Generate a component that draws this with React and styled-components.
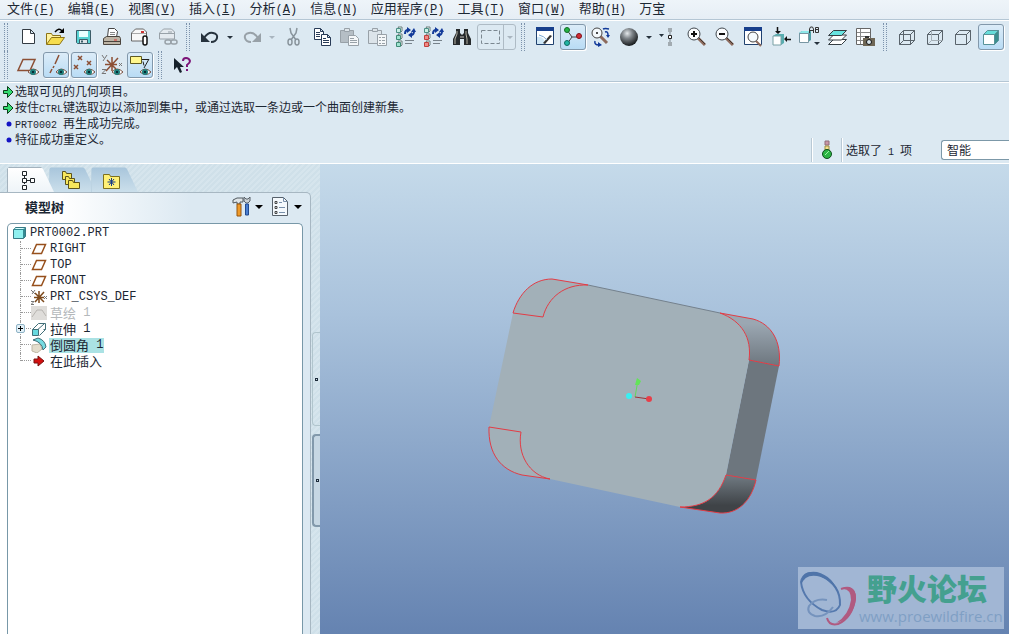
import React, { useState } from 'react';
import styled, { createGlobalStyle, css } from 'styled-components';

const GlobalStyle = createGlobalStyle`
  *, *::before, *::after { box-sizing: border-box; }
  body {
    margin: 0;
    overflow: hidden;
    background: #dce9f2;
    color: #1c2733;
    font-family: 'Liberation Mono', 'Noto Sans CJK SC', monospace;
    font-size: 13px;
  }
  button, select { font: inherit; color: inherit; }
`;

// Styled Components

const Page = styled.div`
  display: flex;
  flex-direction: column;
  height: 100vh;
`;

const Cjk = styled.span`
  font-family: 'Noto Sans CJK SC', sans-serif;
`;

const Latin = styled.span`
  font-family: 'Liberation Mono', monospace;
  font-size: ${(p) => (p.$small ? '10px' : '12px')};
  white-space: pre;
`;

const MenuBar = styled.nav`
  display: flex;
  gap: 13px;
  height: 20px;
  flex: none;
  padding-left: 7px;
  background: linear-gradient(#eef4f9, #e6eef5);
  border-bottom: 1px solid #b4c6d4;
`;

const MenuButton = styled.button`
  padding: 0;
  border: 0;
  background: none;
  line-height: 16px;
  height: 16px;
  white-space: nowrap;
`;

const Toolbars = styled.div`
  flex: none;
  padding: 2px 0;
  border-top: 1px solid #fff;
  border-bottom: 1px solid #b4c6d4;
  overflow: hidden;
`;

const ToolRow = styled.div`
  display: flex;
  height: 28px;
  padding-left: 4px;
`;

const Tools = styled.div`
  display: flex;
  flex: none;
  margin: 0 4px 0 6px;
`;

const Pair = styled.div`
  display: flex;
  margin-right: 2px;
`;

const Grip = styled.div`
  flex: none;
  width: 4px;
  height: 28px;
  border: 0 dotted #7d93ac;
  border-width: 0 1px;
`;

const pressed = css`
  border-color: #8298ab;
  background: linear-gradient(#dcecf8, #b9dcf5);
  box-shadow: 1px 1px 0 #fff;
`;

const ToolButton = styled.button`
  flex: none;
  width: 26px;
  height: 26px;
  margin: 1px;
  padding: 0;
  border: 1px solid transparent;
  border-radius: 3px;
  background: none;
  ${(p) => p.$active && pressed}

  svg { display: block; margin: -1px; }
`;

const DropButton = styled.button`
  flex: none;
  width: 12px;
  padding: 0;
  border: 0;
  background: none;

  &::before {
    content: '';
    display: block;
    width: 6px;
    margin: 0 auto;
    border: 3px solid transparent;
    border-top-color: ${(p) => (p.$dim ? '#a9b5bf' : '#26323d')};
    border-bottom: 0;
  }
`;

const PickBox = styled.div`
  display: flex;
  width: 39px;
  height: 26px;
  margin: 1px;
  border: 1px solid #aebbc5;
  border-radius: 3px;

  ${ToolButton} {
    width: 26px;
    height: 24px;
    margin: 0;
    border: 0;
    border-right: 1px solid #aebbc5;
    border-radius: 0;
  }

  ${ToolButton} svg { margin: -1px 0 0 -1px; }
`;

const MessageArea = styled.section`
  display: flex;
  flex: none;
  justify-content: space-between;
  height: 82px;
  border-top: 1px solid #fff;
  border-bottom: 1px solid #fff;
`;

const Log = styled.ul`
  margin: 0;
  padding: 1px 0 0 2px;
  list-style: none;
  font-size: 12px;
`;

const LogLine = styled.li`
  display: flex;
  align-items: center;
  height: 16px;
  gap: 1px;
  line-height: 16px;
  white-space: nowrap;
`;

const StatusBar = styled.div`
  display: flex;
  align-items: center;
  align-self: flex-end;
  height: 26px;
  font-size: 12px;
`;

const StatusCell = styled.div`
  display: flex;
  align-items: center;
  justify-content: ${(p) => (p.$text ? 'flex-start' : 'center')};
  width: ${(p) => (p.$text ? '100px' : '30px')};
  height: 24px;
  padding-left: ${(p) => (p.$text ? '4px' : '0')};
  border-left: 1px solid #b9c9d5;
  box-shadow: inset 1px 0 0 #fff;
`;

const FilterSelect = styled.select`
  appearance: none;
  width: 68px;
  height: 20px;
  padding: 0 0 0 5px;
  border: 1px solid #7c98a8;
  border-right: 0;
  border-radius: 3px 0 0 3px;
  background: #fff;
  font-family: 'Noto Sans CJK SC', sans-serif;
  font-size: 12px;
  line-height: 18px;
`;

const Workspace = styled.main`
  display: flex;
  flex: 1;
  min-height: 0;
`;

const Sidebar = styled.aside`
  display: flex;
  flex: none;
  width: 320px;
  background: repeating-linear-gradient(135deg, #cfe0e9 0 2px, #d6e5ed 2px 4px);
`;

const Navigator = styled.div`
  display: flex;
  flex: 1;
  flex-direction: column;
`;

const TabList = styled.div`
  display: flex;
  height: 28px;
  padding: 3px 0 0 7px;
`;

const Tab = styled.button`
  width: 47px;
  height: 25px;
  margin-right: -5px;
  padding: 0 0 0 11px;
  border: 0;
  background: ${(p) => (p.$active ? 'linear-gradient(#fff, #eef4f8)' : 'linear-gradient(#a9c6dc, #cbdfeb)')};
  clip-path: polygon(0 2px, 2px 0, 34px 0, 36px 2px, 47px 25px, 0 25px);
  z-index: ${(p) => (p.$active ? 1 : 0)};
  border-top: 1px solid ${(p) => (p.$active ? '#a3b2bd' : '#bcd3e2')};
  border-left: 1px solid ${(p) => (p.$active ? '#a3b2bd' : '#bcd3e2')};

  svg { display: block; }
`;

const Panel = styled.div`
  display: flex;
  flex: 1;
  flex-direction: column;
  margin-right: 1px;
  border-top: 1px solid #a7b7c2;
  border-right: 1px solid #a7b7c2;
  border-radius: 0 5px 0 0;
  background: linear-gradient(90deg, #fff 0, #fff 60px, #dce9f2 190px);
`;

const PanelHeader = styled.div`
  display: flex;
  align-items: center;
  height: 30px;
  padding: 0 0 2px 25px;
`;

const PanelTitle = styled.h2`
  flex: 1;
  margin: 0;
  font-family: 'Noto Sans CJK SC', sans-serif;
  font-size: 13px;
  font-weight: 700;
  line-height: 18px;
`;

const PanelButton = styled.button`
  display: flex;
  align-items: center;
  width: 39px;
  padding: 0;
  border: 0;
  background: none;

  &::after {
    content: '';
    margin-left: 3px;
    border: 4px solid transparent;
    border-top-color: #000;
    border-bottom: 0;
  }
`;

const Tree = styled.ul`
  flex: 1;
  margin: 0 7px;
  padding: 1px 0 0;
  border: 1px solid #7898a8;
  border-bottom: 0;
  border-radius: 5px 5px 0 0;
  background: #fff;
  list-style: none;
`;

const TreeRow = styled.li`
  display: flex;
  align-items: center;
  height: 16px;
  padding-left: ${(p) => (p.$root ? '4px' : '12px')};
  color: ${(p) => (p.$dim ? '#b4b8bb' : 'inherit')};
  white-space: nowrap;

  svg { flex: none; display: block; }
`;

const Branch = styled.div`
  position: relative;
  align-self: flex-start;
  width: 11px;
  height: ${(p) => (p.$last ? '8px' : '16px')};
  border-left: 1px dotted #9a9a9a;

  &::after {
    content: '';
    position: absolute;
    top: 7px;
    left: 0;
    width: 10px;
    border-top: 1px dotted #9a9a9a;
  }
`;

const Expander = styled.button`
  position: absolute;
  z-index: 1;
  top: 3px;
  left: -5px;
  width: 9px;
  height: 9px;
  padding: 0;
  border: 1px solid #8fb3c6;
  border-radius: 2px;
  background: linear-gradient(#000, #000) center / 5px 1px no-repeat,
    linear-gradient(#000, #000) center / 1px 5px no-repeat, #e2f0f7;
`;

const TreeLabel = styled.span`
  display: flex;
  align-items: center;
  height: 15px;
  margin-left: 2px;
  padding: 0 1px;
  background: ${(p) => (p.$selected ? '#aae2e4' : 'transparent')};
  line-height: 14px;
`;

const Sashes = styled.div`
  display: flex;
  flex-direction: column;
  gap: 8px;
  width: 8px;
  padding-top: 168px;
`;

const Sash = styled.button`
  display: flex;
  align-items: center;
  justify-content: center;
  height: ${(p) => (p.$raised ? '93px' : '94px')};
  padding: 0;
  border: ${(p) => (p.$raised ? '2px solid #8299ab' : '1px solid #b1c5cd')};
  border-right: 0;
  border-radius: 4px 0 0 4px;
  background: ${(p) => (p.$raised ? '#c6d7e3' : 'none')};

  &::before {
    content: '';
    width: 3px;
    height: 3px;
    border: 1px solid #1d2c3b;
  }
`;

const Viewport = styled.section`
  position: relative;
  flex: 1;
  min-width: 0;
  background: linear-gradient(#c5daea, #a9c2dc 32%, #6583b1);
`;

const Model = styled.svg`
  display: block;
  width: 100%;
  height: 100%;
`;

const Watermark = styled.div`
  position: absolute;
  right: 5px;
  bottom: 5px;
  display: flex;
  width: 206px;
  height: 62px;
  background: #a1b6d4;
`;

const WatermarkText = styled.div`
  line-height: 1;
`;

const WatermarkName = styled.div`
  padding: 3px 0 0 8px;
  color: #44a08f;
  font-family: 'Noto Sans CJK SC', sans-serif;
  font-size: 30px;
  font-weight: 900;
  line-height: 34px;
`;

const WatermarkUrl = styled.div`
  padding-top: 2px;
  color: #7f9fc4;
  font-family: 'Open Sans', sans-serif;
  font-size: 15px;
  line-height: 20px;
`;

// Splits a label so that Chinese and Latin runs get their own face
const Mixed = ({ text, small }) =>
  text.split(/([\x20-\x7e]+)/).filter(Boolean).map((run, i) =>
    /^[\x20-\x7e]/.test(run)
      ? <Latin key={i} $small={small}>{run}</Latin>
      : <Cjk key={i}>{run}</Cjk>
  );

const dark = '#333b42';
const grey = '#98a1a8';

const Eye = () => (
  <g>
    <path d="M14 21q5-6 11 0q-5 5-11 0z" fill="#fff" stroke="#7a5142" />
    <circle cx="19" cy="21" r="3" fill="#1e7f7c" />
    <rect x="18" y="20" width="2" height="2" fill="#062c35" />
  </g>
);

const Magnifier = ({ children }) => (
  <g>
    <path d="M15 15l7 7" stroke="#8d6a5c" strokeWidth="3" />
    <path d="M15 14l7 7" stroke="#40352f" />
    <circle cx="11" cy="11" r="6" fill="#fbfdff" stroke="#41484e" />
    {children}
  </g>
);

const Cube = ({ front = 'none', top = 'none', side = 'none', stroke = '#59636b', children }) => (
  <g stroke={stroke} strokeLinejoin="round">
    <path d="M6.500 11.500l4-4h11l-4 4z" fill={top} />
    <path d="M17.500 11.500l4-4v10l-4 4z" fill={side} />
    <path d="M6.500 11.500h11v10h-11z" fill={front} />
    {children}
  </g>
);

const Regen = ({ color, edge }) => (
  <g>
    {[5, 12, 19].map((y, i) => (
      <g key={y}>
        <path d={`M6 ${y - 1}h4v4l-1 1z`} fill="#eef6f6" stroke="#6b7d7b" />
        <path d={`M4.500 ${y + 0.5}h4v4h-4z`} fill={i ? color : '#c9efe4'} stroke={i ? edge : '#4b8f85'} />
      </g>
    ))}
    <path d="M13 11q0-4 3-4M22 8q0 4-3 4" fill="none" stroke="#123a9a" strokeWidth="2" />
    <path d="M15 4l4 3-4 3zM20 9l-4 3 4 3zM19 9l3-4 2 4z" fill="#123a9a" />
    <path d="M13 17.500h9M13 20.500h7" stroke="#77828b" />
  </g>
);

const glyphs = {
  new: <path d="M8.500 6.500h8l4 4v10h-12zM16.500 6.500v4h4" fill="#fff" stroke={dark} />,
  open: (
    <g>
      <path d="M4.500 21V10.500h5l1 2h8V16" fill="#fff3a0" stroke="#8d7416" />
      <path d="M4.500 21.500l5-7h13l-5 7z" fill="#f6dd4e" stroke="#8d7416" />
      <path d="M13 9q4-5 7-1" fill="none" stroke="#000" strokeWidth="1.500" />
      <path d="M22 5v5h-5z" fill="#000" />
    </g>
  ),
  save: (
    <g>
      <path d="M6.500 7.500h14v13h-13l-1-1z" fill="#58d3d3" stroke="#3b5c68" />
      <path d="M9 8h9v6H9z" fill="#eaffff" />
      <path d="M9.500 16.500h8v4h-8z" fill="#dce4e8" stroke="#3b5c68" />
      <path d="M12 17.500v2" stroke="#3b5c68" strokeWidth="2" />
    </g>
  ),
  print: (
    <g>
      <path d="M9.500 14l1-8.500h6l3 3-1 5.500z" fill="#fff" stroke="#444" />
      <path d="M12 9.500h5M12 11.500h5" stroke="#888" />
      <path d="M5.500 15.500l3-2h13l1 2v6h-17z" fill="#bdb4a5" stroke="#4a443d" />
      <path d="M6 18.500h16" stroke="#4a443d" />
      <path d="M16 17h3" stroke="#d33" />
    </g>
  ),
  mail: (
    <g>
      <path d="M5.500 18V10l4-4h8l3 3v9z" fill="#f8f8f8" stroke="#666" />
      <path d="M6 10.500h14" stroke="#aaa" />
      <path d="M15 9h3" stroke="#c33" strokeWidth="2" />
      <path d="M17 20v-5q0-2 2-2t2 2v5q0 2-2 2t-2-2z" fill="#fff" stroke="#111" strokeWidth="1.500" />
    </g>
  ),
  mailLink: (
    <g>
      <path d="M5.500 16V10l4-4h8l3 3v7z" fill="#e4eaef" stroke={grey} />
      <path d="M6 10.500h14M14 9h4" stroke={grey} />
      <rect x="11" y="17" width="6" height="4" rx="2" fill="#dce9f2" stroke={grey} strokeWidth="1.500" />
      <rect x="17" y="17" width="6" height="4" rx="2" fill="#dce9f2" stroke={grey} strokeWidth="1.500" />
    </g>
  ),
  undo: (
    <g>
      <path d="M8 15q4-6 9-5q5 1 4 5q-1 4-6 4" fill="none" stroke="#26323d" strokeWidth="2" />
      <path d="M5 10v9h9z" fill="#26323d" />
    </g>
  ),
  redo: (
    <g>
      <path d="M20 15q-4-6-9-5q-5 1-4 5q1 4 6 4" fill="none" stroke={grey} strokeWidth="2" />
      <path d="M23 10v9h-9z" fill={grey} />
    </g>
  ),
  cut: (
    <g fill="none" stroke="#89949c" strokeWidth="1.500">
      <path d="M10 5l1 5 5 7M17 5l-1 5-5 7" />
      <ellipse cx="10" cy="19" rx="2" ry="3" />
      <ellipse cx="17" cy="19" rx="2" ry="3" />
    </g>
  ),
  copy: (
    <g fill="#fff" stroke="#283b57">
      <path d="M6.500 5.500h6l3 3v8h-9zM12.500 5.500v3h3" />
      <path d="M8 9.500h4M8 11.500h4M8 13.500h4" />
      <path d="M13.500 11.500h6l3 3v8h-9zM19.500 11.500v3h3" />
      <path d="M15 15.500h3M15 17.500h6M15 19.500h6" />
    </g>
  ),
  paste: (
    <g stroke={grey}>
      <path d="M4.500 7.500h13v12h-13z" fill="#b5bec5" />
      <path d="M8.500 5.500h5v3h-5z" fill="#dde4e9" />
      <path d="M12.500 12.500h7l3 3v7h-10z" fill="#f4f7f9" />
      <path d="M14 15.500h4M14 17.500h7M14 19.500h7" />
    </g>
  ),
  pasteSpecial: (
    <g stroke={grey}>
      <path d="M4.500 7.500h13v13h-13z" fill="#dce4ea" />
      <path d="M8.500 5.500h5v3h-5z" fill="#dde4e9" />
      <path d="M13.500 11.500h9v11h-9z" fill="#f4f7f9" />
      <path d="M15 14.500h2M18 14.500h3M15 17.500h2M18 17.500h3M15 20.500h2M18 20.500h3" />
    </g>
  ),
  regen: <Regen color="#9fe3d0" edge="#3f8a76" />,
  regenAll: <Regen color="#f08a86" edge="#c1403d" />,
  find: (
    <g>
      <path d="M8 6h4v4l2 2 2-2V6h4v4l3 6v6h-7v-6h-4v6H5v-6l3-6z" fill="#262a2c" />
      <path d="M9 8v3l-2 5v5M18 8v3l1 5v5" fill="none" stroke="#b4b1a4" />
      <path d="M12 14h4" stroke="#777" strokeWidth="2" />
    </g>
  ),
  pick: <path d="M5.500 7.500h18v13h-18z" fill="none" stroke="#7b8790" strokeDasharray="4 2" />,
  sketch: (
    <g>
      <path d="M5.500 5.500h17v16h-17z" fill="#fff" stroke="#20416f" />
      <path d="M5 4h18v4H5z" fill="#173f8c" />
      <path d="M6 21v-7q6-2 9 7z" fill="#cfe7f6" />
      <path d="M12 20l7-8 2 1-7 8z" fill="#333" />
      <path d="M8 12q5 1 8 5" fill="none" stroke="#77a5d0" />
    </g>
  ),
  spin: (
    <g>
      <path d="M8 7l5 7-5 7M13 14h7" fill="none" stroke="#444" />
      <circle cx="8" cy="7" r="2.500" fill="#24b343" stroke="#126b26" />
      <circle cx="8" cy="20" r="2.500" fill="#20b5a3" stroke="#0d6b60" />
      <circle cx="20" cy="13" r="2.500" fill="#d12d36" stroke="#801118" />
    </g>
  ),
  orient: (
    <g>
      <path d="M13 13l7 7" stroke="#8d6a5c" strokeWidth="3" />
      <circle cx="10" cy="10" r="5" fill="#f5fafd" stroke="#444" />
      <circle cx="10" cy="10" r="1" fill="#111" />
      <path d="M16 6q2-1 6 0M18 9q3-1 3 3M12 22q-5 0-4-4" fill="none" stroke="#123a9a" strokeWidth="1.500" />
      <path d="M19 12h4l-2 3zM11 19l4 3-4 2z" fill="#123a9a" />
    </g>
  ),
  sphere: (
    <g>
      <defs>
        <radialGradient id="ball" cx="0.4" cy="0.3" r="0.7">
          <stop offset="0" stopColor="#e4e8eb" />
          <stop offset="0.4" stopColor="#80868b" />
          <stop offset="1" stopColor="#16191b" />
        </radialGradient>
      </defs>
      <circle cx="14" cy="14" r="9" fill="url(#ball)" />
    </g>
  ),
  nodes: (
    <g>
      <path d="M4 11h5l-2.500 3z" fill="#26323d" />
      <path d="M15 8v12" stroke="#7c878f" />
      <path d="M13 5h4v4h-4zM13 19h4v4h-4z" fill="#a2abb1" />
      <path d="M13.500 12.500h3v3h-3z" fill="#fff" stroke="#222" />
    </g>
  ),
  zoomIn: <Magnifier><path d="M8 11h6M11 8v6" stroke="#111" strokeWidth="2" /></Magnifier>,
  zoomOut: <Magnifier><path d="M8 11h6" stroke="#111" strokeWidth="2" /></Magnifier>,
  refit: (
    <g>
      <path d="M5.500 5.500h17v16h-17z" fill="#fff" stroke="#20416f" />
      <path d="M5 4h18v4H5z" fill="#173f8c" />
      <path d="M17 18l5 5" stroke="#8d6a5c" strokeWidth="2" />
      <circle cx="14" cy="14" r="5" fill="#f5fafd" stroke="#444" />
    </g>
  ),
  reorient: (
    <g>
      <path d="M6 13l3-2h8v9l-3 2H6z" fill="#57aeb0" />
      <path d="M6 13h8v9H6z" fill="#fff" stroke="#79a0a5" />
      <path d="M10.500 4v6M24 16.500h-5" stroke="#111" strokeWidth="1.500" />
      <path d="M8 8h6l-3 3zM20 13v6l-3-3z" fill="#111" />
    </g>
  ),
  views: (
    <g>
      <path d="M4 10l3-2h9v9l-3 2H4z" fill="#4f9fa5" />
      <path d="M4.500 10.500h9v9h-9z" fill="#fff" stroke="#7896a3" />
      <path d="M4 10l3-2h9l-3 2z" fill="#8fe8e9" />
      <path d="M14.500 10V6l1-2h2l1 2v4M14.500 7.500h4M20.500 9.500v-5h3v2h-3h3v3z" fill="none" stroke="#333" />
      <path d="M19 19h6l-3 3z" fill="#26323d" />
    </g>
  ),
  layers: (
    <g stroke="#353d42" strokeLinejoin="round">
      <path d="M5.500 21.500l5-5h13l-5 5z" fill="#fff" />
      <path d="M5.500 17l5-5h13l-5 5z" fill="#fff" />
      <path d="M5.500 12.500l5-5h13l-5 5z" fill="#67e3e0" />
    </g>
  ),
  viewMgr: (
    <g>
      <path d="M5.500 5.500h14v16h-14z" fill="#fff" stroke="#666" />
      <path d="M6 9.500h13M6 13.500h13M6 17.500h13M9.500 6v15" stroke="#888" />
      <path d="M12 15h12v8H12z" fill="#6e6655" />
      <path d="M14 14h4" stroke="#333" strokeWidth="2" />
      <circle cx="18" cy="19" r="2.500" fill="#d8e4ea" stroke="#111" />
    </g>
  ),
  wireframe: <Cube><path d="M10.500 7.500v10h11M6.500 21.500l4-4" fill="none" /></Cube>,
  hiddenLine: <Cube><path d="M10.500 7.500v10h11M6.500 21.500l4-4" fill="none" stroke="#a5afb6" /></Cube>,
  noHidden: <Cube />,
  shaded: <Cube front="#fff" top="#66ddda" side="#3b8f8f" stroke="#579298" />,
  planes: <g><path d="M9 8.500h12l-5 11H4z" fill="none" stroke="#8c4f34" strokeWidth="1.500" /><Eye /></g>,
  axes: <g><path d="M17 4l-4 9M12 15l-1 2M10 18l-2 4" stroke="#8c4f34" strokeWidth="1.500" /><Eye /></g>,
  points: (
    <g>
      <path d="M8 5l4 4m0-4l-4 4M17 10l4 4m0-4l-4 4M4 14l4 4m0-4l-4 4" stroke="#8c4f34" strokeWidth="1.500" />
      <Eye />
    </g>
  ),
  csys: (
    <g>
      <path d="M14 6v14M7 13.500h12M9 9l9 9M20 7L8 20" stroke="#8c4f34" strokeWidth="1.500" />
      <path d="M4 4l2 3m3-3l-4 6M4 18.500h4l-4 4h4M21 12l3 3m0-3l-3 3" fill="none" stroke="#777" />
      <Eye />
    </g>
  ),
  annotations: (
    <g>
      <path d="M4.500 5.500h11v7h-11z" fill="#fff78e" stroke="#5f5a20" />
      <path d="M16 8.500h7M17 10.500l1 4M23 8l-5 9" fill="none" stroke="#222" />
      <Eye />
    </g>
  ),
  help: (
    <g>
      <path d="M6 7v12l3-3 3 6 2-1-2-5h4z" fill="#16212b" />
      <path d="M15 10q0-3 3-3t4 3q0 2-3 4v2M18 19h2" fill="none" stroke="#7b1377" strokeWidth="2" />
    </g>
  ),
};

const Tool = ({ name, label, active }) => (
  <ToolButton type="button" aria-label={label} aria-pressed={active} $active={active}>
    <svg width="26" height="26" viewBox="1 1 26 26" fill="none">{glyphs[name]}</svg>
  </ToolButton>
);

const menus = [
  ['文件', 'F'], ['编辑', 'E'], ['视图', 'V'], ['插入', 'I'], ['分析', 'A'], ['信息', 'N'],
  ['应用程序', 'P'], ['工具', 'T'], ['窗口', 'W'], ['帮助', 'H'], ['万宝'],
];

const fileTools = [
  ['new', '新建'], ['open', '打开'], ['save', '保存'], ['print', '打印'], ['mail', '邮件'], ['mailLink', '邮件链接'],
];

const editTools = [
  ['cut', '剪切'], ['copy', '复制'], ['paste', '粘贴'], ['pasteSpecial', '选择性粘贴'],
  ['regen', '再生'], ['regenAll', '再生管理器'], ['find', '查找'],
];

const viewTools = [
  ['zoomIn', '放大'], ['zoomOut', '缩小'], ['refit', '重新调整'], ['reorient', '重定向'],
  ['views', '已保存视图'], ['layers', '层'], ['viewMgr', '视图管理器'],
];

const displayTools = [
  ['wireframe', '线框'], ['hiddenLine', '隐藏线'], ['noHidden', '无隐藏线'], ['shaded', '着色', true],
];

const datumTools = [
  ['planes', '基准平面'], ['axes', '基准轴', true], ['points', '基准点', true],
  ['csys', '坐标系'], ['annotations', '注释', true],
];

const messages = [
  { kind: 'prompt', text: '选取可见的几何项目。' },
  { kind: 'prompt', text: '按住CTRL键选取边以添加到集中，或通过选取一条边或一个曲面创建新集。' },
  { kind: 'info', text: 'PRT0002 再生成功完成。' },
  { kind: 'info', text: '特征成功重定义。' },
];

const plane = <path d="M5.500 3.500h9l-4 9h-9z" fill="#fff" stroke="#97501c" strokeWidth="1.500" />;

const treeItems = [
  { text: 'RIGHT', icon: plane },
  { text: 'TOP', icon: plane },
  { text: 'FRONT', icon: plane },
  {
    text: 'PRT_CSYS_DEF',
    icon: (
      <g fill="none">
        <path d="M8 2v12M3 8.500h10M4 4l9 9M13 3L4 13" stroke="#7d4a1c" strokeWidth="1.500" />
        <path d="M0 1l4 4M4 1L1 5M0 12.500h3l-3 3h3M13 7l3 3m0-3l-3 3" stroke="#777" />
      </g>
    ),
  },
  {
    text: '草绘 1',
    dim: true,
    icon: <g><path d="M0 1h16v14H0z" fill="#dfddda" /><path d="M1 12l5-7h5l4 6" fill="none" stroke="#b8b5b1" /></g>,
  },
  {
    text: '拉伸 1',
    expandable: true,
    icon: (
      <g fill="#fff" stroke="#426f78">
        <path d="M7.500 2.500h7v6h-2M1.500 8.500l6-6M8.500 14.500l6-6M4 11l9-8" fill="none" />
        <path d="M1.500 8.500h6v6h-6z" fill="#67d9df" />
      </g>
    ),
  },
  {
    text: '倒圆角 1',
    icon: (
      <g>
        <path d="M1 8v6l5 2 5-4-2-5z" fill="#e3ddcc" stroke="#beb7a5" />
        <path d="M2 3l5-2q7 2 8 9l-3 3q-1-8-10-10z" fill="#75dce2" stroke="#426f78" />
      </g>
    ),
  },
  { text: '在此插入', icon: <path d="M3 6h4V3l6 5-6 5v-3H3z" fill="#d4100f" stroke="#791211" /> },
];

const PartView = () => (
  <Model viewBox="0 0 689 470" preserveAspectRatio="xMidYMid meet">
    <defs>
      <linearGradient id="upper" x1="0" y1="0" x2="0" y2="1">
        <stop offset="0.2" stopColor="#9ba7b2" />
        <stop offset="1" stopColor="#6d767e" />
      </linearGradient>
      <linearGradient id="lower" x1="0" y1="0" x2="0" y2="1">
        <stop offset="0" stopColor="#717b83" />
        <stop offset="0.8" stopColor="#3f4347" />
      </linearGradient>
    </defs>
    <path d="M429 196L459 202L436 316L406 311Z" fill="#6d767e" />
    <path d="M400 149L433 155C451 160 462 177 459 202L429 196C432 174 422 157 400 149Z" fill="url(#upper)" />
    <path d="M406 311L436 316C431 338 417 350 400 349L360 343C384 343 398 334 406 311Z" fill="url(#lower)" />
    <path
      d="M193 149C199 129 213 115 232 115L268 121L400 149C422 157 432 174 429 196L406 311C398 334 384 343 360 343L230 315L202 311C181 306 168 290 169 263Z"
      fill="#a2b0b8"
    />
    <path d="M268 121L400 149" stroke="#74818d" />
    <g fill="none" stroke="#e23c45">
      <path d="M193 149C199 129 213 115 232 115L268 121C245 120 228 133 223 153Z" />
      <path d="M169 263L201 268C197 290 209 311 230 315L202 311C181 306 168 290 169 263Z" />
      <path d="M400 149L433 155C451 160 462 177 459 202L429 196C432 174 422 157 400 149Z" />
      <path d="M406 311L436 316C431 338 417 350 400 349L360 343C384 343 398 334 406 311Z" />
    </g>
    <path d="M315 233L318 216" stroke="#62d95b" />
    <path d="M315 221l2-7 4 3-2 4z" fill="#62e458" />
    <path d="M315 233L329 235" stroke="#9b3437" />
    <circle cx="329" cy="235" r="3" fill="#e83e49" />
    <circle cx="309" cy="232" r="3" fill="#37f0f2" />
  </Model>
);

const App = () => {
  const [filter, setFilter] = useState('智能');
  const [selected, setSelected] = useState('倒圆角 1');

  return (
    <Page>
      <GlobalStyle />
      <MenuBar>
        {menus.map(([name, key]) => (
          <MenuButton key={name} type="button">
            <Cjk>{name}</Cjk>
            {key && <Latin>(<u>{key}</u>)</Latin>}
          </MenuButton>
        ))}
      </MenuBar>

      <Toolbars>
        <ToolRow>
          <Grip />
          <Tools>
            {fileTools.map(([name, label]) => <Tool key={name} name={name} label={label} />)}
          </Tools>
          <Grip />
          <Tools>
            <Pair>
              <Tool name="undo" label="撤消" />
              <DropButton type="button" aria-label="撤消列表" />
            </Pair>
            <Pair>
              <Tool name="redo" label="重做" />
              <DropButton type="button" aria-label="重做列表" $dim />
            </Pair>
            {editTools.map(([name, label]) => <Tool key={name} name={name} label={label} />)}
            <PickBox>
              <Tool name="pick" label="选取框" />
              <DropButton type="button" aria-label="选取方式" $dim />
            </PickBox>
          </Tools>
          <Grip />
          <Tools>
            <Tool name="sketch" label="草绘器" />
            <Tool name="spin" label="旋转中心" active />
            <Tool name="orient" label="定向模式" />
            <Tool name="sphere" label="外观库" />
            <DropButton type="button" aria-label="外观列表" />
            <Tool name="nodes" label="图形工具" />
            {viewTools.map(([name, label]) => <Tool key={name} name={name} label={label} />)}
          </Tools>
          <Grip />
          <Tools>
            {displayTools.map(([name, label, active]) => (
              <Tool key={name} name={name} label={label} active={active} />
            ))}
          </Tools>
        </ToolRow>
        <ToolRow>
          <Grip />
          <Tools>
            {datumTools.map(([name, label, active]) => (
              <Tool key={name} name={name} label={label} active={active} />
            ))}
          </Tools>
          <Grip />
          <Tools>
            <Tool name="help" label="上下文帮助" />
          </Tools>
        </ToolRow>
      </Toolbars>

      <MessageArea>
        <Log>
          {messages.map(({ kind, text }) => (
            <LogLine key={text}>
              <svg width="12" height="14" viewBox="0 0 12 14">
                {kind === 'prompt'
                  ? <path d="M1.500 5.500h4v-4l5.500 5.500-5.500 5.500v-4h-4z" fill="#35dc72" stroke="#0b3d1b" />
                  : <circle cx="7" cy="7" r="2.500" fill="#1414c4" />}
              </svg>
              <span><Mixed text={text} small /></span>
            </LogLine>
          ))}
        </Log>
        <StatusBar>
          <StatusCell>
            <svg width="12" height="20" viewBox="0 0 12 20">
              <path d="M4 1h4v4H4z" fill="#c996a6" stroke="#8f6c78" />
              <path d="M4 6h4v4H4z" fill="#f3e18c" stroke="#a08e45" />
              <circle cx="6" cy="14" r="4.500" fill="#2cb544" stroke="#0f4d1d" />
              <path d="M4 15l4-4" stroke="#9df0a9" />
            </svg>
          </StatusCell>
          <StatusCell $text><span><Mixed text="选取了 1 项" small /></span></StatusCell>
          <FilterSelect aria-label="过滤器" value={filter} onChange={(e) => setFilter(e.target.value)}>
            <option>智能</option>
            <option>几何</option>
          </FilterSelect>
        </StatusBar>
      </MessageArea>

      <Workspace>
        <Sidebar>
          <Navigator>
            <TabList>
              <Tab type="button" aria-label="模型树" $active>
                <svg width="18" height="20" viewBox="-2 0 18 20" fill="#fff" stroke="#20262b">
                  <path d="M3.500 6v8M6 10.500h4" />
                  <path d="M1.500 1.500h4v4h-4zM1.500 8.500h4v4h-4zM1.500 15.500h4v4h-4zM9.500 8.500h4v4h-4z" />
                </svg>
              </Tab>
              <Tab type="button" aria-label="文件夹浏览器">
                <svg width="20" height="20" viewBox="0 0 20 20" fill="#f7e75c" stroke="#5d531a">
                  <path d="M1.500 9.500v-8h3l1 2h5v6z" />
                  <path d="M4.500 14.500v-8h3l1 2h5v6z" />
                  <path d="M7.500 18.500v-8h4l1 2h6v6z" />
                </svg>
              </Tab>
              <Tab type="button" aria-label="收藏夹">
                <svg width="18" height="20" viewBox="0 0 18 20">
                  <path d="M.500 18.500v-14h6l1 2h9v12z" fill="#fff177" stroke="#7d701e" />
                  <path d="M8.500 8v8M4.500 12h8M6 9l5 6M11 9l-5 6" stroke="#173a86" />
                </svg>
              </Tab>
            </TabList>
            <Panel>
              <PanelHeader>
                <PanelTitle>模型树</PanelTitle>
                <PanelButton type="button" aria-label="设置">
                  <svg width="20" height="22" viewBox="0 0 20 22">
                    <path d="M1 7V4l4-2h6v4H8v2H5V6z" fill="#dfe5e8" stroke="#50585e" />
                    <path d="M5 8h4v12H5z" fill="#ef9a29" stroke="#97540d" />
                    <path d="M12 1v4l2 2h2l2-2V1l-2 2h-2z" fill="#c9d0d5" stroke="#596168" />
                    <path d="M13.500 8h3v11h-3z" fill="#4a7fd0" stroke="#214a91" />
                  </svg>
                </PanelButton>
                <PanelButton type="button" aria-label="显示">
                  <svg width="20" height="22" viewBox="0 0 20 22">
                    <path d="M1.500 1.500h11l4 4v14h-15z" fill="#f4f9fd" stroke="#57616b" />
                    <path d="M12.500 1.500v4h4M8 6.500h3M8 11.500h6M8 16.500h6" fill="none" stroke="#7890ab" />
                    <path d="M4 5.500h2v2H4zM4 10.500h2v2H4zM4 15.500h2v2H4z" fill="none" stroke="#444" />
                  </svg>
                </PanelButton>
              </PanelHeader>
              <Tree>
                <TreeRow $root>
                  <svg width="15" height="14" viewBox="0 0 15 14">
                    <path d="M1.500 3.500l2-2h10v9l-2 2h-10z" fill="#348b93" stroke="#377984" />
                    <path d="M2 4h9v8H2z" fill="#8ff0ef" />
                    <path d="M2 3l2-1h9l-2 1z" fill="#d9ffff" />
                  </svg>
                  <TreeLabel><Mixed text="PRT0002.PRT" /></TreeLabel>
                </TreeRow>
                {treeItems.map(({ text, icon, dim, expandable }, i) => (
                  <TreeRow key={text} $dim={dim} onClick={() => setSelected(text)}>
                    <Branch $last={i === treeItems.length - 1}>
                      {expandable && <Expander type="button" aria-label="展开" />}
                    </Branch>
                    <svg width="16" height="16" viewBox="0 0 16 16">{icon}</svg>
                    <TreeLabel $selected={selected === text}><Mixed text={text} /></TreeLabel>
                  </TreeRow>
                ))}
              </Tree>
            </Panel>
          </Navigator>
          <Sashes>
            <Sash type="button" aria-label="展开面板" />
            <Sash type="button" aria-label="收起面板" $raised />
          </Sashes>
        </Sidebar>

        <Viewport>
          <PartView />
          <Watermark>
            <svg width="61" height="62" viewBox="0 0 61 62" fill="none">
              <path d="M3 15Q6 2 22 8Q43 18 42 38Q38 48 24 43Q5 33 3 15z" stroke="#5579ae" strokeWidth="2" />
              <path d="M3 18Q3 3 19 5Q35 9 41 27Q32 11 19 9Q7 7 3 18z" fill="#4f74a9" />
              <path d="M29 33Q17 31 11 39Q8 46 17 49Q27 51 35 40" stroke="#7593bd" strokeWidth="2" />
              <path d="M43 22Q57 17 57 32Q54 51 40 57Q31 59 29 51" stroke="#b05a80" strokeWidth="2" />
              <path d="M44 22Q53 21 53 33Q51 48 38 56Q56 51 58 31Q58 17 44 22z" fill="#b05a80" />
            </svg>
            <WatermarkText>
              <WatermarkName>野火论坛</WatermarkName>
              <WatermarkUrl>www.proewildfire.cn</WatermarkUrl>
            </WatermarkText>
          </Watermark>
        </Viewport>
      </Workspace>
    </Page>
  );
};

export default App;
